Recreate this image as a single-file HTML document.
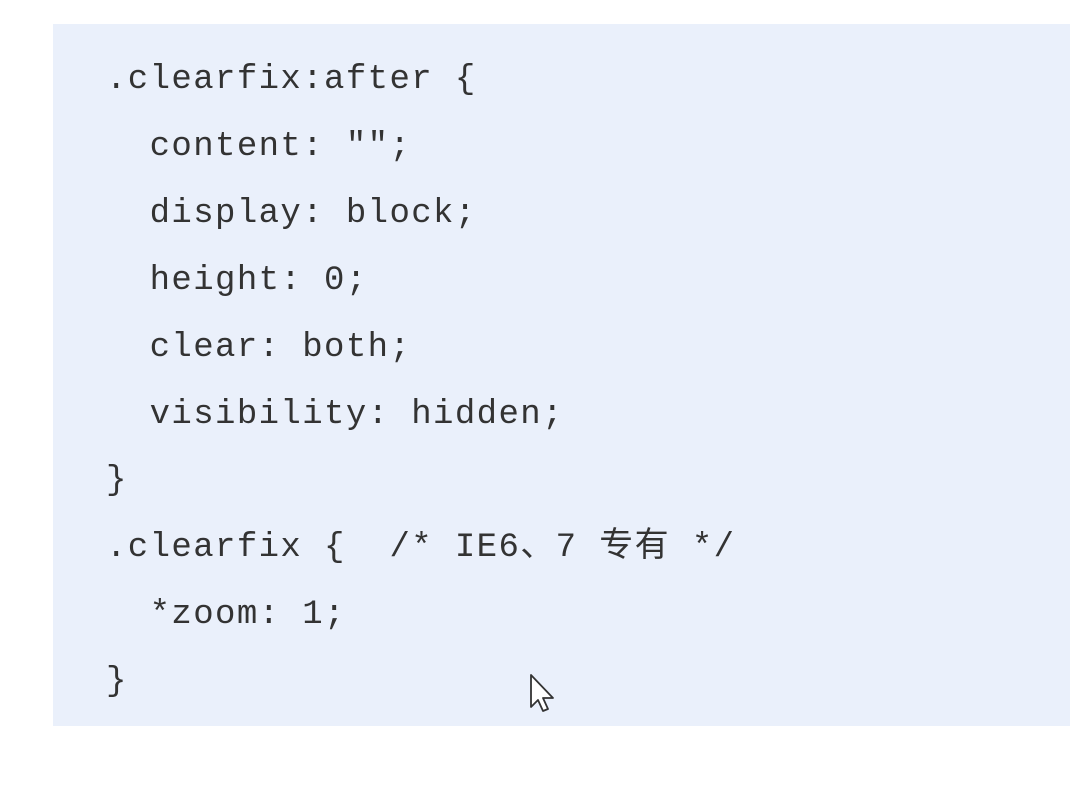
<!DOCTYPE html>
<html><head><meta charset="utf-8"><style>
html,body{margin:0;padding:0;background:#fff;width:1070px;height:786px;overflow:hidden}
.box{position:absolute;left:53px;top:24px;width:1017px;height:702px;background:#eaf0fb}
pre{position:absolute;left:106px;top:47px;margin:0;font-family:"Liberation Mono","Noto Sans CJK SC",monospace;font-size:34px;line-height:66.9px;color:#333;letter-spacing:1.4px}
svg{position:absolute;left:529px;top:673px}
</style></head><body>
<div class="box"></div>
<pre>.clearfix:after {
  content: "";
  display: block;
  height: 0;
  clear: both;
  visibility: hidden;
}
.clearfix {  /* IE6、7 专有 */
  *zoom: 1;
}</pre>
<svg width="28" height="42" viewBox="0 0 28 42"><path d="M2 2 L2 34 L9 27 L14 38 L19 36 L14 25 L24 25 Z" fill="#fff" stroke="#333" stroke-width="1.8" stroke-linejoin="round"/></svg>
</body></html>
